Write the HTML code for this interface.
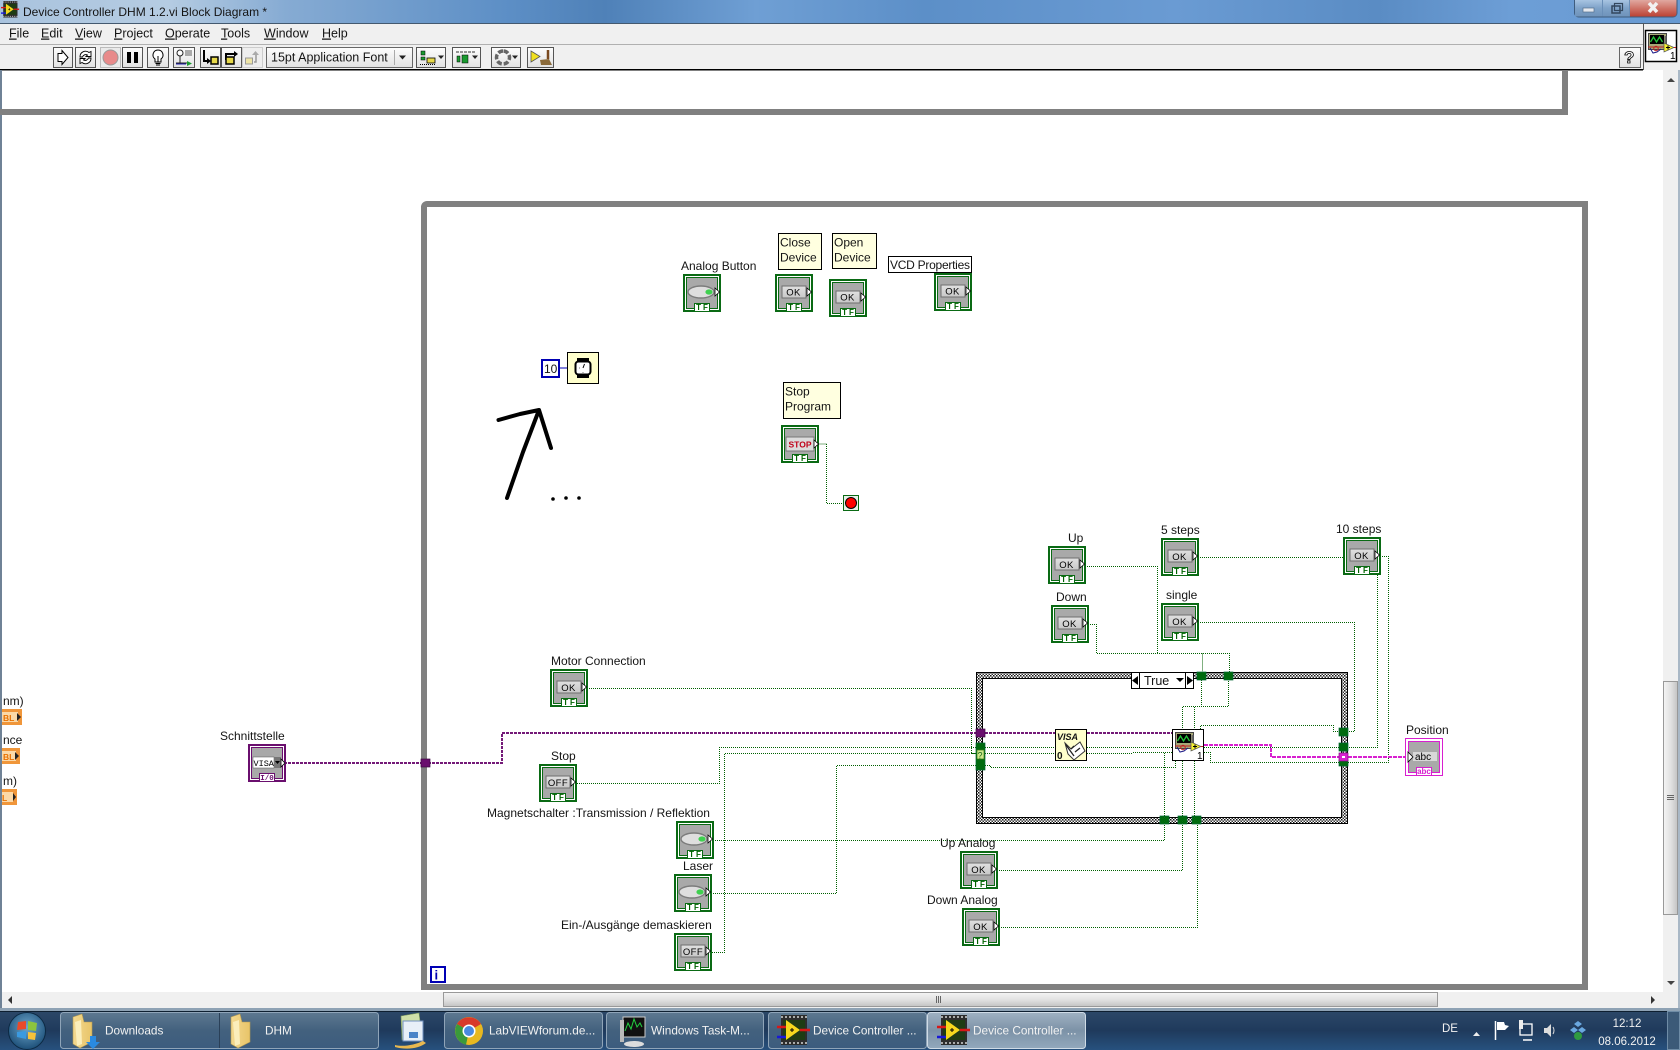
<!DOCTYPE html>
<html><head><meta charset="utf-8"><title>Device Controller DHM 1.2.vi Block Diagram</title>
<style>
html,body{margin:0;padding:0;width:1680px;height:1050px;overflow:hidden;background:#fff}
svg{display:block;position:absolute;left:0;top:0}
text{font-family:"Liberation Sans",sans-serif;font-size:12px;fill:#141414;white-space:pre}
.ok{font-size:9.5px;text-anchor:middle;fill:#000;letter-spacing:.4px}
.tf{font-size:8px;text-anchor:middle;fill:#006400;font-weight:bold;letter-spacing:2px}
.m text{font-size:12.5px}
.tb{fill:#f2f2f2;font-size:11.8px}
.w{fill:none;stroke:#006000;stroke-width:1;stroke-dasharray:1 1;shape-rendering:crispEdges}
.p{fill:none;stroke:#741a78;stroke-width:2;stroke-dasharray:3 1;shape-rendering:crispEdges}
.k{fill:none;stroke:#d81fd0;stroke-width:2;stroke-dasharray:4 1;shape-rendering:crispEdges}
.btn{fill:url(#bt);stroke:#8a8a8a}
</style></head><body>
<svg width="1680" height="1050" viewBox="0 0 1680 1050" xmlns="http://www.w3.org/2000/svg">
<defs>
<linearGradient id="title" x1="0" x2="1" y1="0" y2="0">
<stop offset="0" stop-color="#a9c3de"/><stop offset=".1" stop-color="#b5cce2"/><stop offset=".17" stop-color="#86abd3"/><stop offset=".3" stop-color="#5d8fc6"/><stop offset=".36" stop-color="#4f81b8"/><stop offset=".45" stop-color="#6f9fd4"/><stop offset=".55" stop-color="#5c8fc8"/><stop offset=".7" stop-color="#6a9bd3"/><stop offset=".82" stop-color="#5a8cc4"/><stop offset=".9" stop-color="#6d9ed6"/><stop offset="1" stop-color="#689ad2"/>
</linearGradient>
<linearGradient id="bt" x1="0" x2="0" y1="0" y2="1"><stop offset="0" stop-color="#fdfdfd"/><stop offset="1" stop-color="#e2e2e2"/></linearGradient>
<linearGradient id="gb" x1="0" x2="0" y1="0" y2="1"><stop offset="0" stop-color="#e0e0e0"/><stop offset="1" stop-color="#c8c8c8"/></linearGradient>
<linearGradient id="hs" x1="0" x2="0" y1="0" y2="1"><stop offset="0" stop-color="#f4f4f4"/><stop offset=".5" stop-color="#e2e2e2"/><stop offset="1" stop-color="#c4c4c4"/></linearGradient>
<linearGradient id="vs" x1="0" x2="1" y1="0" y2="0"><stop offset="0" stop-color="#f4f4f4"/><stop offset=".5" stop-color="#e2e2e2"/><stop offset="1" stop-color="#c4c4c4"/></linearGradient>
<linearGradient id="task" x1="0" x2="0" y1="0" y2="1"><stop offset="0" stop-color="#2c4868"/><stop offset=".5" stop-color="#1f3a5c"/><stop offset="1" stop-color="#27517e"/></linearGradient>
<linearGradient id="tbtn" x1="0" x2="0" y1="0" y2="1"><stop offset="0" stop-color="#5d7890"/><stop offset=".5" stop-color="#43617e"/><stop offset="1" stop-color="#3c5c7e"/></linearGradient>
<linearGradient id="tact" x1="0" x2="0" y1="0" y2="1"><stop offset="0" stop-color="#9fb1c2"/><stop offset=".5" stop-color="#7c92a7"/><stop offset="1" stop-color="#92a8bc"/></linearGradient>
<linearGradient id="close" x1="0" x2="0" y1="0" y2="1"><stop offset="0" stop-color="#e0a8a0"/><stop offset=".5" stop-color="#cf7468"/><stop offset="1" stop-color="#bb4234"/></linearGradient>
<linearGradient id="wc" x1="0" x2="0" y1="0" y2="1"><stop offset="0" stop-color="#a8c4e2"/><stop offset=".5" stop-color="#7ea2c8"/><stop offset="1" stop-color="#6f93ba"/></linearGradient>
<linearGradient id="fold" x1="0" x2="1" y1="0" y2="0"><stop offset="0" stop-color="#f3d990"/><stop offset="1" stop-color="#e8c468"/></linearGradient>
<radialGradient id="orb" cx=".5" cy=".4" r=".6"><stop offset="0" stop-color="#6da7cc"/><stop offset="1" stop-color="#1d4f78"/></radialGradient>
<pattern id="chk" width="3" height="3" patternUnits="userSpaceOnUse"><rect width="3" height="3" fill="#fff"/><rect width="1.5" height="1.5" fill="#111"/><rect x="1.5" y="1.5" width="1.5" height="1.5" fill="#333"/></pattern>

<g id="t"><rect x="1" y="1" width="36" height="36" fill="#fff" stroke="#0a6a14" stroke-width="2"/><rect x="3.5" y="3.5" width="31" height="31" fill="#a9a9a9" stroke="#0a6a14"/><rect x="11.5" y="29.5" width="15" height="8" fill="#fff" stroke="#0a6a14"/></g>
<g id="b"><rect x="7" y="12" width="24" height="12" fill="url(#gb)" stroke="#6e6e6e"/><path d="M32 14l4.500 4-4.500 4z" fill="#fff" stroke="#000" stroke-width=".8"/></g>
<g id="an"><ellipse cx="18" cy="18" rx="13" ry="6" fill="#dedede" stroke="#7c7c7c" stroke-width="1.4"/><ellipse cx="26" cy="18" rx="3.6" ry="2.6" fill="#3fd04f"/><path d="M32 14l4.500 4-4.500 4z" fill="#fff" stroke="#000" stroke-width=".8"/></g>
<g id="vi"><rect x="3" y="3" width="19" height="17" fill="#a8a878"/><rect x="3.5" y="3.5" width="18" height="16" fill="none" stroke="#444"/><rect x="5" y="5" width="14" height="9" fill="#000"/><path d="M5.500 12l3-5 3 5 3-5 3 5" fill="none" stroke="#23c43a" stroke-width="1.3"/><rect x="19.500" y="6" width="2" height="8" fill="#666"/><path d="M5 18l3 5 4-1 4-3" fill="none" stroke="#1c1c88"/><circle cx="11" cy="18.500" r="2.2" fill="none" stroke="#c02020"/><path d="M3 17h17" stroke="#c02020"/><path d="M19 13v9l10-4.500z" fill="#f6f032" stroke="#555" stroke-width=".7"/><path d="M21 17.500h4M23 15.500v4" stroke="#000"/><path d="M29 17.500h2" stroke="#c02020"/></g>
<g id="lv"><rect x="4" y="0" width="26" height="30" fill="#2d2d2d"/><rect x="6" y="5" width="22" height="20" fill="#1e3c14"/><path d="M4 2h26M4 28h26" stroke="#aaa" stroke-width="2" stroke-dasharray="2 2"/><path d="M9 5v20l14-10z" fill="#f4d81e"/><path d="M0 12h9" stroke="#d81818" stroke-width="2.500"/><path d="M23 15h10" stroke="#d81818" stroke-width="2.500"/><path d="M0 22h9" stroke="#1818d8" stroke-width="2.500"/><path d="M13 15h4M15 13v4" stroke="#000"/></g>
<g id="folder"><path d="M1 3l9-3 2 8 8 0v20l-12 6-7-4z" fill="url(#fold)" stroke="#b59a50" stroke-width=".6"/><path d="M3 8l6-2 1 24-5 2z" fill="#fbeebb"/></g>
</defs>

<!-- window title -->
<rect width="1680" height="24" fill="url(#title)"/>
<g transform="translate(1,1) scale(.55)"><use href="#lv"/></g>
<text x="23" y="16" fill="#111">Device Controller DHM 1.2.vi Block Diagram *</text>
<path d="M1574.500 0v13a4 4 0 0 0 4 4H1673a4 4 0 0 0 4-4V0" fill="#6a8fb8" stroke="#3e5c7e"/>
<rect x="1575" y="0" width="27" height="16.500" fill="url(#wc)"/><rect x="1603" y="0" width="26" height="16.500" fill="url(#wc)"/>
<path d="M1630 0h46.500v13a3 3 0 0 1-3 3.500H1630z" fill="url(#close)"/>
<rect x="1583" y="8" width="11" height="4" fill="#e4e8ee" stroke="#55708e" stroke-width=".7"/>
<rect x="1612" y="6" width="8" height="7" fill="none" stroke="#33475e" stroke-width="1.500"/><rect x="1614.500" y="3.500" width="8" height="7" fill="none" stroke="#33475e" stroke-width="1.200"/>
<path d="M1649 3l8 9M1657 3l-8 9" stroke="#f2f2f2" stroke-width="3.500"/>

<!-- menu + toolbar -->
<rect x="0" y="23" width="1680" height="47" fill="#f0f0f0"/>
<rect x="0" y="23" width="1680" height="1" fill="#44596f"/>
<rect x="0" y="44" width="1643" height="1" fill="#b0b0b0"/>
<rect x="0" y="69" width="1643" height="1.500" fill="#000"/>
<rect x="1643" y="23" width="1" height="47" fill="#555"/>
<rect x="1644" y="69" width="36" height="1" fill="#f0f0f0"/>
<g class="m">
<text x="9" y="37.500"><tspan text-decoration="underline">F</tspan>ile</text>
<text x="41" y="37.500"><tspan text-decoration="underline">E</tspan>dit</text>
<text x="75" y="37.500"><tspan text-decoration="underline">V</tspan>iew</text>
<text x="114" y="37.500"><tspan text-decoration="underline">P</tspan>roject</text>
<text x="165" y="37.500"><tspan text-decoration="underline">O</tspan>perate</text>
<text x="221" y="37.500"><tspan text-decoration="underline">T</tspan>ools</text>
<text x="264" y="37.500"><tspan text-decoration="underline">W</tspan>indow</text>
<text x="322" y="37.500"><tspan text-decoration="underline">H</tspan>elp</text>
</g>
<!-- toolbar buttons -->
<rect x="53.500" y="47.500" width="19" height="20" class="btn" style="stroke:#555"/>
<path d="M59 53.500h4v-3l6 7-6 7v-3h-4z" transform="translate(-1,0)" fill="#fff" stroke="#000"/>
<rect x="75.500" y="47.500" width="20" height="20" class="btn" style="stroke:#555"/>
<path d="M80 57a5.500 5.500 0 0 1 9-4.500l2-1v5h-5l1.500-1.500a3.500 3.500 0 0 0-5 2zM91 58a5.500 5.500 0 0 1-9 4.500l-2 1v-5h5l-1.500 1.500a3.500 3.500 0 0 0 5-2z" fill="#fff" stroke="#000" stroke-width=".9"/>
<rect x="100.500" y="47.500" width="20" height="20" fill="#eaeaea" stroke="#bbb"/><circle cx="110.500" cy="57.500" r="7.500" fill="#e88a8a" stroke="#999"/>
<rect x="122.500" y="47.500" width="20" height="20" class="btn" style="stroke:#555"/><rect x="127" y="52" width="4" height="11" fill="#000"/><rect x="134" y="52" width="4" height="11" fill="#000"/>
<rect x="147.500" y="47.500" width="21" height="20" class="btn" style="stroke:#555"/>
<path d="M158 50a5 5 0 0 0-3 9v3h6v-3a5 5 0 0 0-3-9zM155.500 63.500h5M156 65h4M158 56v6" fill="#fff" stroke="#000"/>
<rect x="173.500" y="47.500" width="21" height="20" class="btn" style="stroke:#555"/>
<circle cx="180" cy="53" r="3" fill="#fff" stroke="#222"/><path d="M180 56v7M176 63h12" stroke="#222"/><rect x="185" y="50" width="7" height="6" fill="#aaa"/><path d="M187 61l5 2.500-5 2.500z" fill="#1a9a30"/><path d="M176 64h10" stroke="#2020b0"/>
<rect x="200.500" y="47.500" width="20" height="20" class="btn" style="stroke:#555"/>
<path d="M204 50v11h4" fill="none" stroke="#000" stroke-width="2"/><path d="M207 58l4 3-4 3z"/><rect x="211" y="57" width="7" height="7" fill="#e6d84a" stroke="#000" stroke-width="1.500"/>
<rect x="221.500" y="47.500" width="20" height="20" class="btn" style="stroke:#555"/>
<path d="M226 60v-6h9" fill="none" stroke="#000" stroke-width="2"/><path d="M234 51l4 3-4 3z"/><rect x="226" y="57" width="8" height="7" fill="#e6d84a" stroke="#000" stroke-width="1.500"/>
<rect x="242.500" y="47.500" width="20" height="20" fill="#eee" stroke="#ccc"/>
<rect x="245.500" y="58" width="7" height="6" fill="#eee5a8" stroke="#999"/><path d="M254 62h2v-8" fill="none" stroke="#999" stroke-width="1.500"/><path d="M252 55l3.500-4 3.500 4z" fill="#aaa"/>
<rect x="266.500" y="47.500" width="146" height="20" class="btn" style="stroke:#666"/>
<text x="271" y="61.500" style="font-size:12.500px">15pt Application Font</text>
<path d="M394.500 50v15" stroke="#aaa"/><path d="M399 55.500h7l-3.500 4z" fill="#222"/>
<rect x="416.500" y="47.500" width="29" height="20" class="btn" style="stroke:#555"/>
<rect x="421" y="51" width="4" height="4" fill="#1a9a30" stroke="#000" stroke-width=".5"/><rect x="421" y="57" width="4" height="3" fill="#1a9a30" stroke="#000" stroke-width=".5"/><rect x="427" y="58" width="8" height="5" fill="#e6d84a" stroke="#000" stroke-width=".8"/><path d="M420 64.500h16" stroke="#000" stroke-dasharray="1 1"/><path d="M438 55.500h6l-3 3.500z" fill="#222"/>
<rect x="452.500" y="47.500" width="28" height="20" class="btn" style="stroke:#555"/>
<path d="M456 52h19" stroke="#333" stroke-dasharray="3 1"/><rect x="457" y="56" width="3" height="6" fill="#1a9a30" stroke="#000" stroke-width=".5"/><rect x="462" y="55" width="6" height="8" fill="#1a9a30" stroke="#000" stroke-width=".5"/><path d="M472 55.500h6l-3 3.500z" fill="#222"/>
<rect x="491.500" y="47.500" width="29" height="20" class="btn" style="stroke:#555"/>
<path d="M503 51a6.500 6.500 0 1 0 0 13a6.500 6.500 0 1 0 0-13z" fill="none" stroke="#666" stroke-width="3.500" stroke-dasharray="5 2"/><path d="M512 55.500h6l-3 3.500z" fill="#222"/>
<rect x="527.500" y="47.500" width="26" height="20" class="btn" style="stroke:#555"/>
<path d="M531 51v11l9-5.500z" fill="#f0e020" stroke="#555" stroke-width=".8"/><path d="M540 60l9-1 3 6h-11z" fill="#8a6a3a"/><path d="M548 50v9" stroke="#7a4a20" stroke-width="2.500"/>
<rect x="1619.500" y="47.500" width="21" height="20" class="btn" style="stroke:#666"/>
<text x="1624" y="63" style="font-size:17px;fill:#fff;stroke:#000;stroke-width:.8;font-weight:bold">?</text>
<rect x="1645.500" y="30.500" width="31" height="31" fill="#fff" stroke="#000" stroke-width="1.500"/>
<g transform="translate(1645,30)"><use href="#vi"/><text x="25" y="29" style="font-size:10px;fill:#000">1</text></g>

<!-- window frame -->
<rect x="0" y="70" width="2" height="941" fill="#6f8296"/>
<rect x="1678" y="70" width="2" height="941" fill="#a9b8c6"/>

<!-- upper structure remnant -->
<rect x="0" y="109" width="1568" height="6" fill="#808080"/>
<rect x="1562" y="70" width="6" height="45" fill="#808080"/>

<!-- while loop -->
<path d="M424 987V207a3 3 0 0 1 3-3H1585V987z" fill="none" stroke="#808080" stroke-width="6"/>
<rect x="431" y="967" width="14" height="15" fill="#fff" stroke="#0000b4" stroke-width="2"/>
<text x="434.500" y="979.500" style="font-size:13px;fill:#0000b4;font-weight:bold">i</text>

<!-- case structure -->
<rect x="976.500" y="672.500" width="371" height="151" fill="#fff" stroke="#000"/>
<path d="M979.500 675.500h365v145h-365z" fill="none" stroke="url(#chk)" stroke-width="5"/>
<rect x="982.500" y="678.500" width="359" height="139" fill="#fff" stroke="#000"/>

<!-- wires -->
<g>
<path class="w" d="M826.500 444H817M826.500 444V503.500H843"/>
<path class="w" d="M587 688.500H971.500V753.500H986"/>
<path class="w" d="M577 783.500H719.500V747.500H1055"/>
<path class="w" d="M712 952.500H724.500V753.500H1055"/>
<path class="w" d="M711 893.500H836.500V765.500H986"/>
<path class="w" d="M713 840.500H1164.500V816"/>
<path class="w" d="M997 870.500H1182.500V816"/>
<path class="w" d="M999 927.500H1197.500V816"/>
<path class="w" d="M1085 566.500H1157.500V653.500"/>
<path class="w" d="M1088 624.500H1096.500V653.500H1229.500V672"/>
<path class="w" d="M1202.500 653.500V672"/>
<path class="w" d="M1198 557.500H1343"/>
<path class="w" d="M1377.500 575V747.500H1348"/>
<path class="w" d="M1198 622.500H1354.500V731.500H1348"/>
<path class="w" d="M1380 556.500H1388.500V762.500H1348"/>
<path class="w" d="M1087 747.500H1172M1133 752.500H1172M1087 753.500H1133"/>
<path class="w" d="M1164.500 816V752.500"/>
<path class="w" d="M1182.500 816V706.500H1228.500V680"/>
<path class="w" d="M1194.500 816V706.500"/>
<path class="w" d="M1201.500 680V706"/>
<path class="w" d="M1200.500 729V725.500H1333.500V731.500H1339"/>
<path class="w" d="M1204 747.500H1339"/>
<path class="w" d="M1204 752.500H1210.500V762.500H1339"/>
<path class="w" d="M985 765.500H990.500V767.500H1175.500V761"/>
<path class="p" d="M284 763H502V733H976M985 733H1055M1087 733H1172"/>
<path class="k" d="M1204 745H1271V757H1339M1348 757H1405"/>
</g>

<!-- tunnels -->
<g fill="#006a0e" stroke="#063" stroke-width=".7">
<rect x="1197" y="672" width="9" height="8"/><rect x="1224" y="672" width="9" height="8"/>
<rect x="976" y="743" width="9" height="27"/>
<rect x="1339" y="728" width="9" height="8"/><rect x="1339" y="743" width="9" height="8"/><rect x="1339" y="760" width="9" height="6"/>
<rect x="1160" y="816" width="9" height="8"/><rect x="1178" y="816" width="9" height="8"/><rect x="1192" y="816" width="9" height="8"/>
</g>
<rect x="976" y="729" width="9" height="8" fill="#6a0f6e" stroke="#3c0a40" stroke-width=".7"/>
<rect x="421" y="759" width="9" height="8" fill="#6a0f6e" stroke="#3c0a40" stroke-width=".7"/>
<rect x="977" y="750" width="7" height="9" fill="#cfe88a" stroke="#3a7a18" stroke-width=".7"/>
<text x="977.500" y="758.500" style="font-size:9px;fill:#1a6a1a">?</text>
<rect x="1339" y="753" width="9" height="8" fill="#d81fd0" stroke="#801080" stroke-width=".7"/><rect x="1342" y="756" width="3" height="2" fill="#fff"/>

<!-- case selector -->
<rect x="1131.500" y="672.500" width="62" height="16" fill="#fff" stroke="#000"/>
<path d="M1139.500 673v15M1185.500 673v15" stroke="#000"/>
<path d="M1138 676v9l-6-4.500zM1187 676v9l6-4.500z" fill="#000"/>
<text x="1144" y="685" style="font-size:12.500px">True</text>
<path d="M1176 678h8l-4 4z" fill="#000"/>

<!-- case nodes -->
<rect x="1055.500" y="729.500" width="31" height="31" fill="#ffffcc" stroke="#000"/>
<text x="1057" y="740" style="font-size:9px;font-style:italic;font-weight:bold">VISA</text>
<text x="1057" y="759" style="font-size:10px;font-weight:bold">0</text>
<path d="M1065 743l6 6 9-7 5 9-11 9-6-6z" fill="#fff" stroke="#333"/><path d="M1066 745l8 11M1071 749l3-3M1075 752l5-4" stroke="#222" stroke-width="1.300"/>
<rect x="1172.500" y="729.500" width="31" height="31" fill="#fff" stroke="#000"/>
<g transform="translate(1172,729)"><use href="#vi"/><text x="25" y="30" style="font-size:10px;fill:#000">1</text></g>

<!-- note boxes -->
<rect x="778.500" y="233.500" width="43" height="36" fill="#ffffe0" stroke="#000"/>
<text x="780" y="246.500">Close</text><text x="780" y="261.500">Device</text>
<rect x="832.500" y="233.500" width="44" height="35" fill="#ffffe0" stroke="#000"/>
<text x="834" y="246.500">Open</text><text x="834" y="261.500">Device</text>
<rect x="888.500" y="256.500" width="83" height="16" fill="#fff" stroke="#000"/>
<text x="890" y="269" textLength="80">VCD Properties</text>
<rect x="783.500" y="382.500" width="57" height="36" fill="#ffffe0" stroke="#000"/>
<text x="785" y="395.500">Stop</text><text x="785" y="410.500">Program</text>

<!-- labels -->
<text x="681" y="270">Analog Button</text>
<text x="551" y="665">Motor Connection</text>
<text x="551" y="760">Stop</text>
<text x="487" y="817">Magnetschalter :Transmission / Reflektion</text>
<text x="683" y="870">Laser</text>
<text x="561" y="929">Ein-/Ausgänge demaskieren</text>
<text x="940" y="847">Up Analog</text>
<text x="927" y="904">Down Analog</text>
<text x="1068" y="542">Up</text>
<text x="1056" y="601">Down</text>
<text x="1161" y="534">5 steps</text>
<text x="1166" y="599">single</text>
<text x="1336" y="533">10 steps</text>
<text x="220" y="740">Schnittstelle</text>
<text x="1406" y="734">Position</text>
<text x="3" y="705">nm)</text>
<text x="3" y="744">nce</text>
<text x="3" y="785">m)</text>

<!-- terminals -->
<g transform="translate(683,274)"><use href="#t"/><use href="#an"/><text class="tf" x="20" y="36">TF</text></g>
<g transform="translate(775,274)"><use href="#t"/><use href="#b"/><text class="ok" x="18.500" y="21.500">OK</text><text class="tf" x="20" y="36">TF</text></g>
<g transform="translate(829,279)"><use href="#t"/><use href="#b"/><text class="ok" x="18.500" y="21.500">OK</text><text class="tf" x="20" y="36">TF</text></g>
<g transform="translate(934,273)"><use href="#t"/><use href="#b"/><text class="ok" x="18.500" y="21.500">OK</text><text class="tf" x="20" y="36">TF</text></g>
<g transform="translate(781,425)"><use href="#t"/><rect x="5" y="12" width="28" height="14" fill="#dcdcdc" stroke="#777"/><path d="M33 15l4.500 4-4.500 4z" fill="#fff" stroke="#000" stroke-width=".8"/><text x="19" y="22.500" style="font-size:8.500px;fill:#c00018;text-anchor:middle;font-weight:bold">STOP</text><text class="tf" x="20" y="36">TF</text></g>
<g transform="translate(550,669)"><use href="#t"/><use href="#b"/><text class="ok" x="18.500" y="22">OK</text><text class="tf" x="20" y="36">TF</text></g>
<g transform="translate(539,764)"><use href="#t"/><use href="#b"/><text class="ok" x="19" y="22">OFF</text><text class="tf" x="20" y="36">TF</text></g>
<g transform="translate(676,821)"><use href="#t"/><use href="#an"/><text class="tf" x="20" y="36">TF</text></g>
<g transform="translate(674,874)"><use href="#t"/><use href="#an"/><text class="tf" x="20" y="36">TF</text></g>
<g transform="translate(674,933)"><use href="#t"/><use href="#b"/><text class="ok" x="19" y="22">OFF</text><text class="tf" x="20" y="36">TF</text></g>
<g transform="translate(960,851)"><use href="#t"/><use href="#b"/><text class="ok" x="18.500" y="22">OK</text><text class="tf" x="20" y="36">TF</text></g>
<g transform="translate(962,908)"><use href="#t"/><use href="#b"/><text class="ok" x="18.500" y="22">OK</text><text class="tf" x="20" y="36">TF</text></g>
<g transform="translate(1048,546)"><use href="#t"/><use href="#b"/><text class="ok" x="18.500" y="22">OK</text><text class="tf" x="20" y="36">TF</text></g>
<g transform="translate(1051,605)"><use href="#t"/><use href="#b"/><text class="ok" x="18.500" y="22">OK</text><text class="tf" x="20" y="36">TF</text></g>
<g transform="translate(1161,538)"><use href="#t"/><use href="#b"/><text class="ok" x="18.500" y="22">OK</text><text class="tf" x="20" y="36">TF</text></g>
<g transform="translate(1161,603)"><use href="#t"/><use href="#b"/><text class="ok" x="18.500" y="22">OK</text><text class="tf" x="20" y="36">TF</text></g>
<g transform="translate(1343,537)"><use href="#t"/><use href="#b"/><text class="ok" x="18.500" y="22">OK</text><text class="tf" x="20" y="36">TF</text></g>

<!-- Schnittstelle -->
<g transform="translate(248,744)">
<rect x="1" y="1" width="36" height="36" fill="#fff" stroke="#6a0f6e" stroke-width="2"/><rect x="3.500" y="3.500" width="31" height="31" fill="#a9a9a9" stroke="#6a0f6e"/>
<rect x="5" y="13" width="21" height="11" fill="#fff" stroke="#555" stroke-width=".5"/><rect x="26" y="13" width="7" height="11" fill="#777"/><path d="M27 17h5l-2.500 3z" fill="#000"/>
<text x="5.500" y="22" style="font-size:8.500px;fill:#000;font-family:'Liberation Mono',monospace">VISA</text>
<path d="M33 15l4 4-4 4z" fill="#fff" stroke="#000" stroke-width=".8"/>
<rect x="11.500" y="29.500" width="15" height="8" fill="#fff" stroke="#6a0f6e"/>
<text x="19" y="36" style="font-size:7.500px;fill:#6a0f6e;text-anchor:middle;font-weight:bold;font-family:'Liberation Mono',monospace">I/0</text>
</g>
<!-- Position -->
<g transform="translate(1405,738)">
<rect x=".500" y=".500" width="37" height="37" fill="#fff" stroke="#d81fd0"/><rect x="3.500" y="3.500" width="31" height="31" fill="#a9a9a9" stroke="#d81fd0"/>
<rect x="8" y="14" width="24" height="9" fill="#d8d8d8"/><path d="M3 14l5 5-5 5z" fill="#fff" stroke="#000" stroke-width=".8"/>
<text x="10" y="22" style="font-size:10px;fill:#000">abc</text>
<rect x="11.500" y="29.500" width="15" height="8" fill="#fff" stroke="#d81fd0"/>
<text x="19" y="36" style="font-size:8px;fill:#d81fd0;text-anchor:middle;font-weight:bold">abc</text>
</g>
<!-- left DBLs -->
<g fill="#f0963a">
<rect x="2" y="709" width="20" height="16"/><rect x="2" y="748" width="18" height="16"/><rect x="2" y="789" width="15" height="16"/>
</g>
<rect x="2" y="712" width="16" height="10" fill="#fbd9a8"/><rect x="2" y="751" width="14" height="10" fill="#fbd9a8"/><rect x="2" y="792" width="11" height="10" fill="#fbd9a8"/>
<text x="3" y="721" style="font-size:8.500px;fill:#e87000;font-weight:bold">BL</text>
<text x="3" y="760" style="font-size:8.500px;fill:#e87000;font-weight:bold">BL</text>
<text x="2" y="801" style="font-size:8.500px;fill:#e87000;font-weight:bold">L</text>
<path d="M17 713v8l4-4zM15 752v8l4-4zM13 793v8l3-4z" fill="#222"/>

<!-- wait + const -->
<rect x="542" y="360" width="17" height="17" fill="#fff" stroke="#0000b4" stroke-width="2"/>
<text x="544" y="373">10</text>
<path d="M560 368h7" stroke="#0000b4"/>
<rect x="567.500" y="352.500" width="31" height="31" fill="#ffffcc" stroke="#000"/>
<rect x="577" y="358" width="12" height="4" fill="#000"/><rect x="577" y="374" width="12" height="4" fill="#000"/><rect x="575.500" y="361.500" width="15" height="13" rx="3" fill="#fff" stroke="#000" stroke-width="2"/><path d="M583 368l1.500-4M579 368h.5M583 372v.5" stroke="#000"/>

<!-- hand-drawn arrow -->
<path d="M498.500 420L520 414 539 410 523 452 507 498M539 410L551 448" fill="none" stroke="#000" stroke-width="4" stroke-linecap="round" stroke-linejoin="round"/>
<circle cx="553" cy="499" r="1.800"/><circle cx="566" cy="498" r="1.800"/><circle cx="579" cy="498" r="1.800"/>

<!-- stop terminal -->
<rect x="843.500" y="495.500" width="15" height="15" fill="#e8f0e8" stroke="#0a6a14"/><circle cx="851" cy="503" r="5.500" fill="#f00" stroke="#000"/>

<!-- scrollbars -->
<rect x="1663" y="70" width="15" height="922" fill="#f0f0f0"/>
<rect x="1663.500" y="681.500" width="14" height="233" fill="url(#vs)" stroke="#999"/>
<path d="M1667 795.500h7M1667 797.500h7M1667 799.500h7" stroke="#666"/>
<path d="M1667 82h8l-4-4z" fill="#444"/><path d="M1667 981h8l-4 4z" fill="#444"/>
<rect x="2" y="992" width="1676" height="16" fill="#f0f0f0"/>
<rect x="443.500" y="992.500" width="994" height="14" fill="url(#hs)" stroke="#999"/>
<path d="M938.500 996v7M936.500 996v7M940.500 996v7" stroke="#666"/>
<path d="M12 996v8l-4-4z" fill="#333"/><path d="M1651 996v8l4-4z" fill="#333"/>
<rect x="0" y="1008" width="1680" height="3" fill="#8ea2b4"/>

<!-- taskbar -->
<rect x="0" y="1011" width="1680" height="39" fill="url(#task)"/>
<rect x="0" y="1011" width="1680" height="1" fill="#0e1f30"/>
<circle cx="27" cy="1031" r="18.500" fill="url(#orb)" stroke="#0c2a44"/>
<path d="M18 1022l8-1v8l-9 1z" fill="#e84a2a"/><path d="M28 1021l9 2-1 8-8-1z" fill="#8cc43e"/><path d="M17 1032l9-1v8l-9-2z" fill="#3a9ae0"/><path d="M28 1032l8 1-1 7-7-1z" fill="#f6c23a"/>
<rect x="60.500" y="1012.500" width="318" height="36" rx="3" fill="url(#tbtn)" stroke="#8fa4b8"/>
<path d="M219.500 1013v35" stroke="#2a4058"/>
<g transform="translate(72,1014)"><use href="#folder"/><path d="M18 22h6v6h4l-7 7-7-7h4z" fill="#2a8ae0"/></g>
<text class="tb" x="105" y="1034.500">Downloads</text>
<g transform="translate(230,1014)"><use href="#folder"/></g>
<text class="tb" x="265" y="1034.500">DHM</text>
<g transform="translate(395,1012)">
<path d="M6 4l18-3 3 24-20 3z" fill="#cfe0a8" stroke="#7e9a5a" stroke-width=".6"/><rect x="8" y="9" width="20" height="20" fill="#e8f0f8" stroke="#7090c0"/><rect x="14" y="20" width="9" height="6" fill="#4a84c8"/><path d="M0 33c8 2 20 0 28-4l3 2c-8 6-20 7-31 4z" fill="#e8b850"/>
</g>
<rect x="444.500" y="1012.500" width="158" height="36" rx="3" fill="url(#tbtn)" stroke="#8fa4b8"/>
<g transform="translate(469,1031)">
<circle r="14" fill="#e8b820"/><path d="M0 0L-12-7A14 14 0 0 1 12-7z" fill="#d83a2a"/><path d="M0 0L-12-7A14 14 0 0 0-3 13.700z" fill="#3a9a3a"/><circle r="6.500" fill="#fff"/><circle r="5" fill="#4a8ae0"/>
</g>
<text class="tb" x="489" y="1034.500">LabVIEWforum.de...</text>
<rect x="606.500" y="1012.500" width="157" height="36" rx="3" fill="url(#tbtn)" stroke="#8fa4b8"/>
<g transform="translate(617,1014)">
<rect x="6" y="3" width="22" height="20" fill="#111" stroke="#ccc"/><path d="M8 17l3-8 3 6 3-10 3 8 3-4 2 4" fill="none" stroke="#23d040"/><rect x="3" y="6" width="4" height="22" fill="#bbb"/><ellipse cx="17" cy="30" rx="10" ry="3" fill="#ddd"/>
</g>
<text class="tb" x="651" y="1034.500">Windows Task-M...</text>
<rect x="768.500" y="1012.500" width="158" height="36" rx="3" fill="url(#tbtn)" stroke="#8fa4b8"/>
<g transform="translate(777,1015)"><use href="#lv"/></g>
<text class="tb" x="813" y="1034.500">Device Controller ...</text>
<rect x="927.500" y="1012.500" width="158" height="36" rx="3" fill="url(#tact)" stroke="#cfdbe6"/>
<g transform="translate(937,1015)"><use href="#lv"/></g>
<text class="tb" x="973" y="1034.500">Device Controller ...</text>

<text class="tb" x="1442" y="1032" style="font-size:11.500px">DE</text>
<path d="M1473 1036h7l-3.500-4z" fill="#eee"/>
<path d="M1495.500 1021v19" stroke="#fff" stroke-width="1.500"/><path d="M1497 1022h7l1 3 4 1-4 4h-8z" fill="#fff"/>
<rect x="1520" y="1024" width="12" height="11" fill="none" stroke="#fff" stroke-width="1.300"/><rect x="1519" y="1020" width="4" height="9" fill="#eee"/><path d="M1523 1040h9" stroke="#fff" stroke-width="1.500"/>
<path d="M1544 1028h3l4-4v13l-4-4h-3z" fill="#ddd"/><path d="M1553 1027q2 3.500 0 7" fill="none" stroke="#ddd"/>
<path d="M1574 1024l4-3 4 3-4 3zM1570 1030l4-3 4 3-4 3zM1578 1030l4-3 4 3-4 3z" fill="#6aa8e0"/><circle cx="1578" cy="1036" r="4" fill="#2f9a40"/>
<text class="tb" x="1627" y="1027" text-anchor="middle" style="font-size:11.500px">12:12</text>
<text class="tb" x="1627" y="1045" text-anchor="middle" style="font-size:11.500px">08.06.2012</text>
<rect x="1667.500" y="1011.500" width="12" height="38" fill="#3c5a78" stroke="#6f8ca6"/>
</svg>
</body></html>
